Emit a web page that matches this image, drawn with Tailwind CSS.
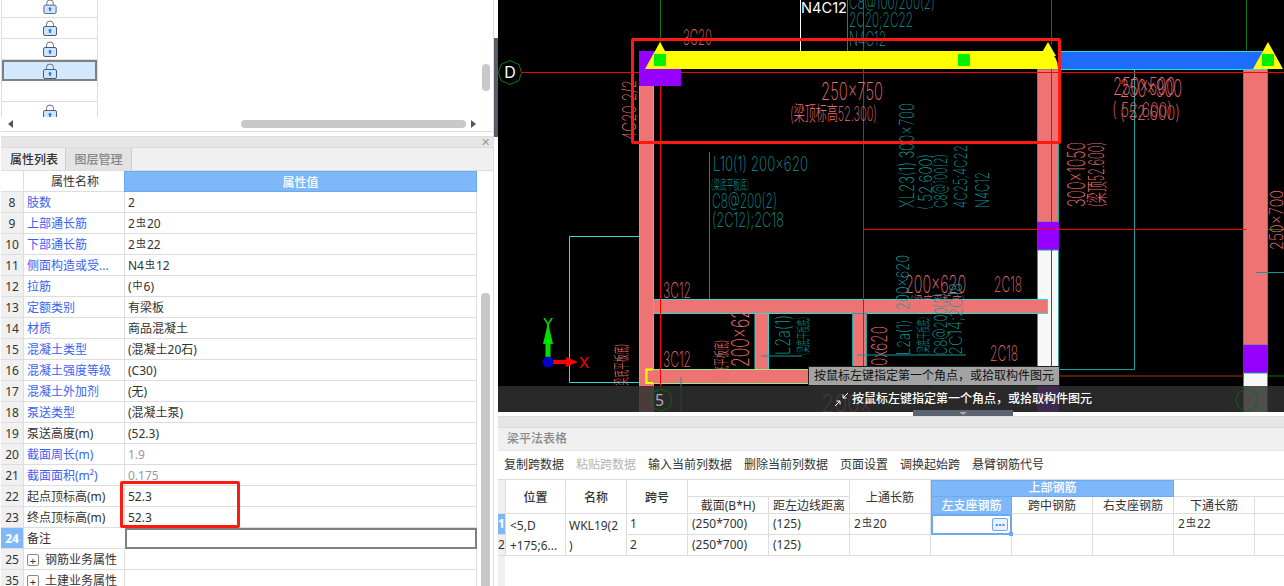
<!DOCTYPE html>
<html lang="zh">
<head>
<meta charset="utf-8">
<script src="https://cdn.jsdelivr.net/npm/@tailwindcss/browser@4"></script>
</head>
<body class="m-0 bg-white">
<svg width="0" height="0" class="absolute">
  <defs>
    <symbol id="lock" viewBox="0 0 14 16">
      <path d="M3.5 7V4.5a3.5 3.5 0 0 1 7 0V7" fill="none" stroke="#66707f" stroke-width="1"/>
      <rect x="0.5" y="6.5" width="13" height="9" rx="1.5" fill="#cfe3fb" stroke="#4d5f7c"/>
      <path d="M7 8.5l2 2.2H7.9V13H6.1v-2.3H5z" fill="#1f7ae8"/>
    </symbol>
  </defs>
</svg>
<div class="flex w-[1284px] h-[586px] overflow-hidden font-['Noto_Sans','Noto_Sans_CJK_SC',sans-serif] text-[12px] text-[#333]">

  <!-- LEFT -->
  <div class="relative w-[494px] shrink-0 flex flex-col border-r border-[#ddd] pl-[1px]">
    <div class="relative h-[132px] shrink-0 border-b border-[#ddd]">
      <div class="w-[97px] h-[117px] overflow-hidden border-x border-[#ddd]">
        <div class="h-[18px] border-b border-[#ddd] flex justify-center items-end pb-[3px]"><svg class="w-[14px] h-[15px]"><use href="#lock"/></svg></div>
        <div class="h-[21px] border-b border-[#ddd] flex justify-center items-center"><svg class="w-[14px] h-[16px]"><use href="#lock"/></svg></div>
        <div class="h-[21px] border-b border-[#ddd] flex justify-center items-center"><svg class="w-[14px] h-[16px]"><use href="#lock"/></svg></div>
        <div class="h-[21px] border-2 border-[#808080] bg-[#d2e8fe] flex justify-center items-center"><svg class="w-[14px] h-[16px]"><use href="#lock"/></svg></div>
        <div class="h-[21px] border-b border-[#ddd]"></div>
        <div class="h-[21px] flex justify-center items-start pt-[2px]"><svg class="w-[14px] h-[16px]"><use href="#lock"/></svg></div>
      </div>
      <div class="absolute left-[7px] top-[120px] w-0 h-0 border-y-[4px] border-y-transparent border-r-[5px] border-r-[#555]"></div>
      <div class="absolute left-[240px] top-[120px] w-[225px] h-[8px] rounded bg-[#c8c8c8]"></div>
      <div class="absolute left-[470px] top-[120px] w-0 h-0 border-y-[4px] border-y-transparent border-l-[5px] border-l-[#555]"></div>
      <div class="absolute left-[481px] top-[64px] w-[8px] h-[27px] rounded bg-[#c8c8c8]"></div>
    </div>
    <div class="h-[4px] shrink-0"></div>
    <div class="relative h-[12px] shrink-0 bg-[#e6e6e6] border-y border-[#ddd]">
      <span class="absolute right-[3px] -top-[1px] text-[11px] leading-[12px] text-[#999]">✕</span>
    </div>
    <div class="h-[23px] shrink-0 bg-[#f0f0f0] border-b border-[#ddd] flex">
      <div class="w-[65px] flex items-center justify-center border-r border-[#ccc] font-medium text-[#333] pt-[2px] pl-[2px]">属性列表</div>
      <div class="w-[66px] flex items-center justify-center bg-[#e3e3e3] border-r border-[#ccc] text-[#888] font-medium pt-[2px]">图层管理</div>
    </div>

    <div class="w-[476px] flex flex-col [&>div>div]:pt-[2px]">
      <div class="flex h-[21px] shrink-0">
        <div class="w-[23px] border-r border-b border-[#ddd]"></div>
        <div class="w-[100px] flex items-center justify-center border-b border-[#ddd] pl-[2px]">属性名称</div>
        <div class="flex-1 flex items-center justify-center bg-[#7fb8f8] border border-[#6aaaf0] text-white font-medium">属性值</div>
      </div>
      <div class="flex h-[21px]"><div class="w-[23px] bg-[#f0f0f0] border-r border-b border-[#ddd] flex items-center justify-center">8</div><div class="w-[101px] border-r border-b border-[#ddd] flex items-center pl-[3px] text-[#3a62f0]">肢数</div><div class="flex-1 border-r border-b border-[#ddd] flex items-center pl-[3px]">2</div></div>
      <div class="flex h-[21px]"><div class="w-[23px] bg-[#f0f0f0] border-r border-b border-[#ddd] flex items-center justify-center">9</div><div class="w-[101px] border-r border-b border-[#ddd] flex items-center pl-[3px] text-[#3a62f0]">上部通长筋</div><div class="flex-1 border-r border-b border-[#ddd] flex items-center pl-[3px]">2<span class="text-[10px] -mt-[4px] mx-[1px]">虫</span>20</div></div>
      <div class="flex h-[21px]"><div class="w-[23px] bg-[#f0f0f0] border-r border-b border-[#ddd] flex items-center justify-center">10</div><div class="w-[101px] border-r border-b border-[#ddd] flex items-center pl-[3px] text-[#3a62f0]">下部通长筋</div><div class="flex-1 border-r border-b border-[#ddd] flex items-center pl-[3px]">2<span class="text-[10px] -mt-[4px] mx-[1px]">虫</span>22</div></div>
      <div class="flex h-[21px]"><div class="w-[23px] bg-[#f0f0f0] border-r border-b border-[#ddd] flex items-center justify-center">11</div><div class="w-[101px] border-r border-b border-[#ddd] flex items-center pl-[3px] text-[#3a62f0]">侧面构造或受...</div><div class="flex-1 border-r border-b border-[#ddd] flex items-center pl-[3px]">N4<span class="text-[10px] -mt-[4px] mx-[1px]">虫</span>12</div></div>
      <div class="flex h-[21px]"><div class="w-[23px] bg-[#f0f0f0] border-r border-b border-[#ddd] flex items-center justify-center">12</div><div class="w-[101px] border-r border-b border-[#ddd] flex items-center pl-[3px] text-[#3a62f0]">拉筋</div><div class="flex-1 border-r border-b border-[#ddd] flex items-center pl-[3px]">(<span class="text-[10px] -mt-[4px] mx-[1px]">中</span>6)</div></div>
      <div class="flex h-[21px]"><div class="w-[23px] bg-[#f0f0f0] border-r border-b border-[#ddd] flex items-center justify-center">13</div><div class="w-[101px] border-r border-b border-[#ddd] flex items-center pl-[3px] text-[#3a62f0]">定额类别</div><div class="flex-1 border-r border-b border-[#ddd] flex items-center pl-[3px]">有梁板</div></div>
      <div class="flex h-[21px]"><div class="w-[23px] bg-[#f0f0f0] border-r border-b border-[#ddd] flex items-center justify-center">14</div><div class="w-[101px] border-r border-b border-[#ddd] flex items-center pl-[3px] text-[#3a62f0]">材质</div><div class="flex-1 border-r border-b border-[#ddd] flex items-center pl-[3px]">商品混凝土</div></div>
      <div class="flex h-[21px]"><div class="w-[23px] bg-[#f0f0f0] border-r border-b border-[#ddd] flex items-center justify-center">15</div><div class="w-[101px] border-r border-b border-[#ddd] flex items-center pl-[3px] text-[#3a62f0]">混凝土类型</div><div class="flex-1 border-r border-b border-[#ddd] flex items-center pl-[3px]">(混凝土20石)</div></div>
      <div class="flex h-[21px]"><div class="w-[23px] bg-[#f0f0f0] border-r border-b border-[#ddd] flex items-center justify-center">16</div><div class="w-[101px] border-r border-b border-[#ddd] flex items-center pl-[3px] text-[#3a62f0]">混凝土强度等级</div><div class="flex-1 border-r border-b border-[#ddd] flex items-center pl-[3px]">(C30)</div></div>
      <div class="flex h-[21px]"><div class="w-[23px] bg-[#f0f0f0] border-r border-b border-[#ddd] flex items-center justify-center">17</div><div class="w-[101px] border-r border-b border-[#ddd] flex items-center pl-[3px] text-[#3a62f0]">混凝土外加剂</div><div class="flex-1 border-r border-b border-[#ddd] flex items-center pl-[3px]">(无)</div></div>
      <div class="flex h-[21px]"><div class="w-[23px] bg-[#f0f0f0] border-r border-b border-[#ddd] flex items-center justify-center">18</div><div class="w-[101px] border-r border-b border-[#ddd] flex items-center pl-[3px] text-[#3a62f0]">泵送类型</div><div class="flex-1 border-r border-b border-[#ddd] flex items-center pl-[3px]">(混凝土泵)</div></div>
      <div class="flex h-[21px]"><div class="w-[23px] bg-[#f0f0f0] border-r border-b border-[#ddd] flex items-center justify-center">19</div><div class="w-[101px] border-r border-b border-[#ddd] flex items-center pl-[3px]">泵送高度(m)</div><div class="flex-1 border-r border-b border-[#ddd] flex items-center pl-[3px]">(52.3)</div></div>
      <div class="flex h-[21px]"><div class="w-[23px] bg-[#f0f0f0] border-r border-b border-[#ddd] flex items-center justify-center">20</div><div class="w-[101px] border-r border-b border-[#ddd] flex items-center pl-[3px] text-[#3a62f0]">截面周长(m)</div><div class="flex-1 border-r border-b border-[#ddd] flex items-center pl-[3px] text-[#999]">1.9</div></div>
      <div class="flex h-[21px]"><div class="w-[23px] bg-[#f0f0f0] border-r border-b border-[#ddd] flex items-center justify-center">21</div><div class="w-[101px] border-r border-b border-[#ddd] flex items-center pl-[3px] text-[#3a62f0]">截面面积(m²)</div><div class="flex-1 border-r border-b border-[#ddd] flex items-center pl-[3px] text-[#999]">0.175</div></div>
      <div class="flex h-[21px]"><div class="w-[23px] bg-[#f0f0f0] border-r border-b border-[#ddd] flex items-center justify-center">22</div><div class="w-[101px] border-r border-b border-[#ddd] flex items-center pl-[3px]">起点顶标高(m)</div><div class="flex-1 border-r border-b border-[#ddd] flex items-center pl-[3px]">52.3</div></div>
      <div class="flex h-[21px]"><div class="w-[23px] bg-[#f0f0f0] border-r border-b border-[#ddd] flex items-center justify-center">23</div><div class="w-[101px] border-r border-b border-[#ddd] flex items-center pl-[3px]">终点顶标高(m)</div><div class="flex-1 border-r border-b border-[#ddd] flex items-center pl-[3px]">52.3</div></div>
      <div class="flex h-[21px]"><div class="w-[23px] bg-[#7fb8f8] border-r border-b border-[#ddd] flex items-center justify-center text-white font-bold">24</div><div class="w-[101px] border-b border-[#ddd] flex items-center pl-[3px]">备注</div><div class="flex-1 border-2 border-[#808080]"></div></div>
      <div class="flex h-[21px]"><div class="w-[23px] bg-[#f0f0f0] border-r border-b border-[#ddd] flex items-center justify-center">25</div><div class="w-[101px] border-r border-b border-[#ddd] flex items-center pl-[3px] gap-[6px] whitespace-nowrap"><span class="w-[12px] h-[12px] rounded-[2px] border border-[#888] flex items-center justify-center text-[11px] leading-none">+</span>钢筋业务属性</div><div class="flex-1 border-r border-b border-[#ddd]"></div></div>
      <div class="flex h-[21px]"><div class="w-[23px] bg-[#f0f0f0] border-r border-b border-[#ddd] flex items-center justify-center">35</div><div class="w-[101px] border-r border-b border-[#ddd] flex items-center pl-[3px] gap-[6px] whitespace-nowrap"><span class="w-[12px] h-[12px] rounded-[2px] border border-[#888] flex items-center justify-center text-[11px] leading-none">+</span>土建业务属性</div><div class="flex-1 border-r border-b border-[#ddd]"></div></div>
    </div>

    <div class="absolute left-[481px] top-[293px] w-[9px] h-[293px] rounded-t bg-[#c8c8c8]"></div>
    <div class="absolute left-[120px] top-[481px] w-[120px] h-[47px] border-[3px] border-[#ff1a10] rounded-[2px]"></div>
  </div>

  <!-- DIVIDER -->
  <div class="w-[4px] shrink-0 relative">
    <div class="absolute top-[38px] left-0 w-[4px] h-[99px] bg-[#555e68]"></div>
  </div>

  <!-- RIGHT -->
  <div class="flex-1 flex flex-col min-w-0">
    <div class="relative h-[412px] shrink-0 bg-black overflow-hidden">
      <svg class="block w-[786px] h-[412px] font-['Inter','Noto_Sans_CJK_SC',sans-serif] font-extralight" viewBox="498 0 786 412">
        <!-- axis lines top -->
        <g stroke="#0a7a0a" stroke-width="1">
          <path d="M660.5 0V45M863.5 0V52M1051.5 0V45M1246.5 0V50M1246 229.5H1284M1060 376H1284"/>
        </g>
        <path d="M800.5 0V51" stroke="#fff" stroke-width="1"/>
        <path d="M847.5 0V51" stroke="#0d8a8a" stroke-width="1"/>
        <!-- left frame and leaders -->
        <path d="M639 236.500H569.500V382.500H640" fill="none" stroke="#26dede"/>
        <path d="M1058 369.500H1134.500V69" fill="none" stroke="#12a5a5"/>
        <path d="M709.500 152V305" stroke="#0d8a8a"/>
        <!-- columns -->
        <rect x="639.500" y="70" width="14" height="342" fill="#ee7373" stroke="#26dede"/>
        <rect x="1037.500" y="69" width="21" height="153" fill="#ee7373" stroke="#12a5a5"/>
        <rect x="1037" y="222" width="22" height="28" fill="#9500ff"/>
        <rect x="1037.500" y="250" width="21" height="136" fill="#f7f7f7" stroke="#12a5a5"/>
        <rect x="1243.500" y="69" width="24" height="276" fill="#ee7373" stroke="#12a5a5"/>
        <rect x="1243" y="345" width="25" height="28" fill="#9500ff"/>
        <rect x="1243.500" y="373" width="24" height="40" fill="#f7f7f7" stroke="#12a5a5"/>
        <rect x="1037" y="386" width="22" height="26" fill="#9500ff"/>
        <!-- horizontal beams -->
        <rect x="653.500" y="299.500" width="394" height="14" fill="#ee7373" stroke="#26dede"/>
        <rect x="755" y="313.500" width="13.500" height="56" fill="#ee7373" stroke="#26dede"/>
        <rect x="852.500" y="313.500" width="14" height="56" fill="#ee7373" stroke="#12a5a5"/>
        <rect x="646" y="369.500" width="170" height="14" fill="#ee7373" stroke="#8cf08c"/>
        <path d="M653 369.500H646.500V383H653" fill="none" stroke="#ffff00" stroke-width="2"/>
        <!-- red axes -->
        <g stroke="#f00" stroke-width="1">
          <path d="M498 72.500H1284"/>
          <path d="M660.500 69V386M863.500 69V369M1051.500 69V386"/>
          <path d="M863 229.500H1246"/>
        </g>
        <path d="M1060 376H1244" stroke="#a00000" stroke-width="1"/>
        <!-- top beams -->
        <rect x="639" y="51" width="42" height="35" fill="#9500ff"/>
        <rect x="1059.500" y="51.500" width="207" height="18" fill="#1e6cfb" stroke="#26dede"/>
        <path d="M660 51H1048Q1058 56 1058 69H660Z" fill="#ffff00"/>
        <path d="M660 42L645 69H675Z" fill="#ffff00"/>
        <path d="M1048 42L1040 56H1056Z" fill="#ffff00"/>
        <path d="M1268 42L1253 69H1283Z" fill="#ffff00"/>
        <rect x="654" y="54" width="12" height="12" fill="#00f000"/>
        <rect x="958" y="54" width="12" height="12" fill="#00f000"/>
        <rect x="1262" y="54" width="12" height="12" fill="#00f000"/>

        <!-- grid bubbles -->
        <path d="M510 60.500L519 64.500L521.500 72.500L519 80.500L510 84.500L501 80.500L498.500 72.500L501 64.500Z" fill="#000" stroke="#0a7a0a"/>
        <text x="510" y="78" font-size="16" font-weight="400" fill="#fff" text-anchor="middle">D</text>
        <text x="801" y="13" font-size="14" font-weight="400" fill="#fff" textLength="46" lengthAdjust="spacingAndGlyphs">N4C12</text>

        <!-- CAD labels, pink -->
        <g fill="#e97070">
          <text x="683" y="45" font-size="21" textLength="29" lengthAdjust="spacingAndGlyphs">3C20</text>
          <text x="821" y="100" font-size="24" textLength="62" lengthAdjust="spacingAndGlyphs">250x750</text>
          <text x="790" y="121" font-size="20" textLength="87" lengthAdjust="spacingAndGlyphs">(梁顶标高52.300)</text>
          <text transform="translate(636,140) rotate(-90)" font-size="19" textLength="60" lengthAdjust="spacingAndGlyphs">4C20 2/2</text>
          <text x="1113" y="95" font-size="24" textLength="62" lengthAdjust="spacingAndGlyphs">250x500</text>
          <text x="1120" y="97" font-size="24" textLength="62" lengthAdjust="spacingAndGlyphs">250x900</text>
          <text x="1112" y="117" font-size="20" textLength="60" lengthAdjust="spacingAndGlyphs">( 52.600)</text>
          <text x="1120" y="120" font-size="20" textLength="60" lengthAdjust="spacingAndGlyphs">( 52.600)</text>
          <text transform="translate(1085,207) rotate(-90)" font-size="24" textLength="65" lengthAdjust="spacingAndGlyphs">300x1050</text>
          <text transform="translate(1104,207) rotate(-90)" font-size="21" textLength="65" lengthAdjust="spacingAndGlyphs">(梁顶52.600)</text>
          <text transform="translate(1283,250) rotate(-90)" font-size="18" textLength="60" lengthAdjust="spacingAndGlyphs">250x700</text>
          <text x="663" y="298" font-size="21" textLength="28" lengthAdjust="spacingAndGlyphs">3C12</text>
          <text x="663" y="367" font-size="21" textLength="28" lengthAdjust="spacingAndGlyphs">3C12</text>
          <text transform="translate(627,388) rotate(-90)" font-size="16" textLength="44" lengthAdjust="spacingAndGlyphs">(梁底平板底)</text>
          <text transform="translate(727,384) rotate(-90)" font-size="16" textLength="44" lengthAdjust="spacingAndGlyphs">(梁底平板底)</text>
          <text transform="translate(749,367) rotate(-90)" font-size="24" textLength="58" lengthAdjust="spacingAndGlyphs">200x62</text>
          <text x="905" y="293" font-size="24" textLength="61" lengthAdjust="spacingAndGlyphs">200x620</text>
          <text x="994" y="292" font-size="21" textLength="28" lengthAdjust="spacingAndGlyphs">2C18</text>
          <text x="990" y="361" font-size="21" textLength="28" lengthAdjust="spacingAndGlyphs">2C18</text>
          <text transform="translate(887,366) rotate(-90)" font-size="22" textLength="40" lengthAdjust="spacingAndGlyphs">0x620</text>
          <text x="910" y="306" font-size="14" textLength="55" lengthAdjust="spacingAndGlyphs">(梁底平板底)</text>
          <text x="821" y="412" font-size="24" textLength="50" lengthAdjust="spacingAndGlyphs">200x</text>
        </g>
        <!-- CAD labels, teal -->
        <g fill="#0f9a9a">
          <text x="849" y="9" font-size="19" textLength="86" lengthAdjust="spacingAndGlyphs">C8@100/200(2)</text>
          <text x="849" y="27" font-size="20" textLength="64" lengthAdjust="spacingAndGlyphs">2C20;2C22</text>
          <text x="849" y="46" font-size="20" textLength="37" lengthAdjust="spacingAndGlyphs">N4C12</text>
          <text x="713" y="171" font-size="20" textLength="95" lengthAdjust="spacingAndGlyphs">L10(1) 200x620</text>
          <text x="711" y="189" font-size="13" textLength="38" lengthAdjust="spacingAndGlyphs">(梁底平板底)</text>
          <text x="712" y="208" font-size="20" textLength="65" lengthAdjust="spacingAndGlyphs">C8@200(2)</text>
          <text x="712" y="227" font-size="20" textLength="72" lengthAdjust="spacingAndGlyphs">(2C12);2C18</text>
          <text transform="translate(914,208) rotate(-90)" font-size="20" textLength="105" lengthAdjust="spacingAndGlyphs">XL23(1) 300x700</text>
          <text transform="translate(932,210) rotate(-90)" font-size="18" textLength="56" lengthAdjust="spacingAndGlyphs">( 52.600)</text>
          <text transform="translate(947,208) rotate(-90)" font-size="18" textLength="54" lengthAdjust="spacingAndGlyphs">C8@100(2)</text>
          <text transform="translate(967,208) rotate(-90)" font-size="18" textLength="63" lengthAdjust="spacingAndGlyphs">4C25;4C22</text>
          <text transform="translate(989,208) rotate(-90)" font-size="19" textLength="36" lengthAdjust="spacingAndGlyphs">N4C12</text>
          <text transform="translate(790,355) rotate(-90)" font-size="20" textLength="40" lengthAdjust="spacingAndGlyphs">L2a(1)</text>
          <text transform="translate(808,355) rotate(-90)" font-size="14" textLength="38" lengthAdjust="spacingAndGlyphs">(梁底平板底)</text>
          <text transform="translate(909,310) rotate(-90)" font-size="18" textLength="55" lengthAdjust="spacingAndGlyphs">200x620</text>
          <text transform="translate(910,355) rotate(-90)" font-size="18" textLength="35" lengthAdjust="spacingAndGlyphs">L2a(1)</text>
          <text transform="translate(928,355) rotate(-90)" font-size="14" textLength="38" lengthAdjust="spacingAndGlyphs">(梁底平板底)</text>
          <text transform="translate(947,355) rotate(-90)" font-size="18" textLength="62" lengthAdjust="spacingAndGlyphs">C8@200(2)</text>
          <text transform="translate(962,355) rotate(-90)" font-size="18" textLength="72" lengthAdjust="spacingAndGlyphs">2C14;2C18</text>
        </g>
        <path d="M761 356H802M857 355H966M1256 272.500H1284" stroke="#0f9a9a"/>
        <path d="M681 377V412" stroke="#0f9a9a"/>
        <!-- UCS -->
        <path d="M548 362V340" stroke="#00e000" stroke-width="5"/>
        <path d="M548 323L543 344H553Z" fill="#00e000"/>
        <path d="M548 362H570" stroke="#f00" stroke-width="4"/>
        <path d="M578 362L566 357V367Z" fill="#f00"/>
        <circle cx="548" cy="362" r="5.500" fill="#0000c8"/>
        <text x="543" y="329" font-size="15" font-weight="400" fill="#00e000">Y</text>
        <text x="579" y="368" font-size="15" font-weight="400" fill="#f00">X</text>
      </svg>

      <!-- status strip -->
      <div class="absolute left-0 right-0 top-[386px] h-[26px] bg-[#303030]/85 flex items-center pl-[336px] gap-[3px] text-white font-medium">
        <svg class="w-[15px] h-[15px]" viewBox="0 0 15 15" fill="none" stroke="#fff" stroke-width="1"><path d="M1 14L6 9M6 9H2.500M6 9V12.500M14 1L9 6M9 6H12.500M9 6V2.500"/></svg>
        <span>按鼠标左键指定第一个角点，或拾取构件图元</span>
      </div>
      <svg class="absolute left-[151px] top-[388px] w-[24px] h-[24px]" viewBox="0 0 26 26" fill="none"><path d="M13 1L22 5L25 13L22 21L13 25L4 21L1 13L4 5Z" stroke="#0a6a0a"/></svg>
      <span class="absolute left-[157px] top-[390px] text-[16px] leading-[20px] text-[#aaa]">5</span>
      <svg class="absolute left-[737px] top-[388px] w-[24px] h-[24px]" viewBox="0 0 26 26" fill="none"><path d="M13 1L22 5L25 13L22 21L13 25L4 21L1 13L4 5Z" stroke="#0a6a0a"/></svg>
      <!-- tooltip -->
      <div class="absolute left-[310px] top-[366px] w-[252px] h-[20px] bg-[#a3a3a3] border border-[#222] flex items-center pl-[5px] text-[#111] whitespace-nowrap">按鼠标左键指定第一个角点，或拾取构件图元</div>
      <!-- handle -->
      <div class="absolute left-[415px] top-[410px] w-[100px] h-[2px] bg-[#5b6470]"></div>
      <div class="absolute left-[133px] top-[38px] w-[430px] h-[106px] border-[3px] border-[#ff1a10] rounded-[2px]"></div>
    </div>

    <div class="h-[4px] shrink-0 bg-[#5b6470] ml-[415px] w-[100px] relative">
      <div class="absolute left-[46px] top-0 w-0 h-0 border-x-[4px] border-x-transparent border-t-[3px] border-t-[#aaa]"></div>
    </div>
    <div class="h-[12px] shrink-0 bg-[#e6e6e6] border-y border-[#ddd]"></div>
    <div class="h-[22px] shrink-0 bg-[#f0f0f0] flex items-center pl-[9px] text-[#888] font-medium">梁平法表格</div>
    <div class="h-[29px] shrink-0 flex items-center pl-[6px] gap-[12px] whitespace-nowrap border-t border-[#e6e6e6]">
      <span>复制跨数据</span><span class="text-[#b5b5b5]">粘贴跨数据</span><span>输入当前列数据</span><span>删除当前列数据</span><span>页面设置</span><span>调换起始跨</span><span>悬臂钢筋代号</span>
    </div>
    <div class="flex-1 flex min-h-0">
      <div class="grid grid-cols-[7px_61px_61px_61px_81px_81px_81px_81px_81px_81px_81px_103px] grid-rows-[17px_17px_21px_21px_1fr] h-full border-t border-[#ddd] whitespace-nowrap overflow-hidden">
        <div class="row-span-2 bg-[#f0f0f0] border-b border-[#ddd]"></div>
        <div class="row-span-2 flex items-center justify-center border-l border-r border-b border-[#ddd] font-medium pt-[2px]">位置</div>
        <div class="row-span-2 flex items-center justify-center border-r border-b border-[#ddd] font-medium pt-[2px]">名称</div>
        <div class="row-span-2 flex items-center justify-center border-r border-b border-[#ddd] font-medium pt-[2px]">跨号</div>
        <div class="col-span-2 border-r border-b border-[#ddd]"></div>
        <div class="row-span-2 flex items-center justify-center border-r border-b border-[#ddd] pt-[2px]">上通长筋</div>
        <div class="col-span-3 flex items-center justify-center bg-[#7fb8f8] border border-[#6aaaf0] text-white font-medium pb-[2px]">上部钢筋</div>
        <div class="col-span-2 flex items-center justify-center border-b border-[#ddd] pl-[136px] pb-[2px]"><span>下部钢筋</span></div>

        <div class="flex items-center justify-center border-r border-b border-[#ddd] pt-[2px]">截面(B*H)</div>
        <div class="flex items-center justify-center border-r border-b border-[#ddd] pt-[2px]">距左边线距离</div>
        <div class="flex items-center justify-center bg-[#7fb8f8] border-x border-[#6aaaf0] text-white font-medium">左支座钢筋</div>
        <div class="flex items-center justify-center border-r border-b border-[#ddd] pt-[2px]">跨中钢筋</div>
        <div class="flex items-center justify-center border-r border-b border-[#ddd] pt-[2px]">右支座钢筋</div>
        <div class="flex items-center justify-center border-r border-b border-[#ddd] pt-[2px]">下通长筋</div>
        <div class="flex items-center pl-[88px] border-b border-[#ddd] pt-[2px]">下</div>

        <div class="flex items-center justify-center bg-[#7fb8f8] text-white font-bold border-b border-[#ddd] overflow-hidden">1</div>
        <div class="row-span-2 border-l border-r border-b border-[#ddd] pl-[4px] pt-[2px] leading-[20px]">&lt;5,D<br>+175;6...</div>
        <div class="row-span-2 border-r border-b border-[#ddd] pl-[3px] pt-[2px] leading-[20px]">WKL19(2<br>)</div>
        <div class="flex items-center pl-[3px] border-r border-b border-[#ddd]">1</div>
        <div class="flex items-center pl-[4px] border-r border-b border-[#ddd]">(250*700)</div>
        <div class="flex items-center pl-[4px] border-r border-b border-[#ddd]">(125)</div>
        <div class="flex items-center pl-[4px] border-r border-b border-[#ddd]">2<span class="text-[10px] -mt-[4px] mx-[1px]">虫</span>20</div>
        <div class="relative border-2 border-[#6aaaf0] flex items-center justify-end pr-[2px]">
          <div class="w-[16px] h-[13px] rounded-[2px] border border-[#6aaaf0] bg-[#e8f2fe] flex items-center justify-center text-[#3b78c8] text-[12px] font-bold leading-none">···</div>
          <div class="absolute -right-[3px] -bottom-[3px] w-[4px] h-[4px] bg-[#6aaaf0]"></div>
        </div>
        <div class="border-r border-b border-[#ddd]"></div>
        <div class="border-r border-b border-[#ddd]"></div>
        <div class="flex items-center pl-[4px] border-r border-b border-[#ddd]">2<span class="text-[10px] -mt-[4px] mx-[1px]">虫</span>22</div>
        <div class="border-b border-[#ddd]"></div>

        <div class="flex items-center justify-center bg-[#f0f0f0] border-b border-[#ddd] overflow-hidden">2</div>
        <div class="flex items-center pl-[3px] border-r border-b border-[#ddd]">2</div>
        <div class="flex items-center pl-[4px] border-r border-b border-[#ddd]">(250*700)</div>
        <div class="flex items-center pl-[4px] border-r border-b border-[#ddd]">(125)</div>
        <div class="border-r border-b border-[#ddd]"></div>
        <div class="border-r border-b border-[#ddd]"></div>
        <div class="border-r border-b border-[#ddd]"></div>
        <div class="border-r border-b border-[#ddd]"></div>
        <div class="border-r border-b border-[#ddd]"></div>
        <div class="border-b border-[#ddd]"></div>

        <div class="bg-[#f0f0f0]"></div>
      </div>
    </div>
  </div>
</div>
</body>
</html>
